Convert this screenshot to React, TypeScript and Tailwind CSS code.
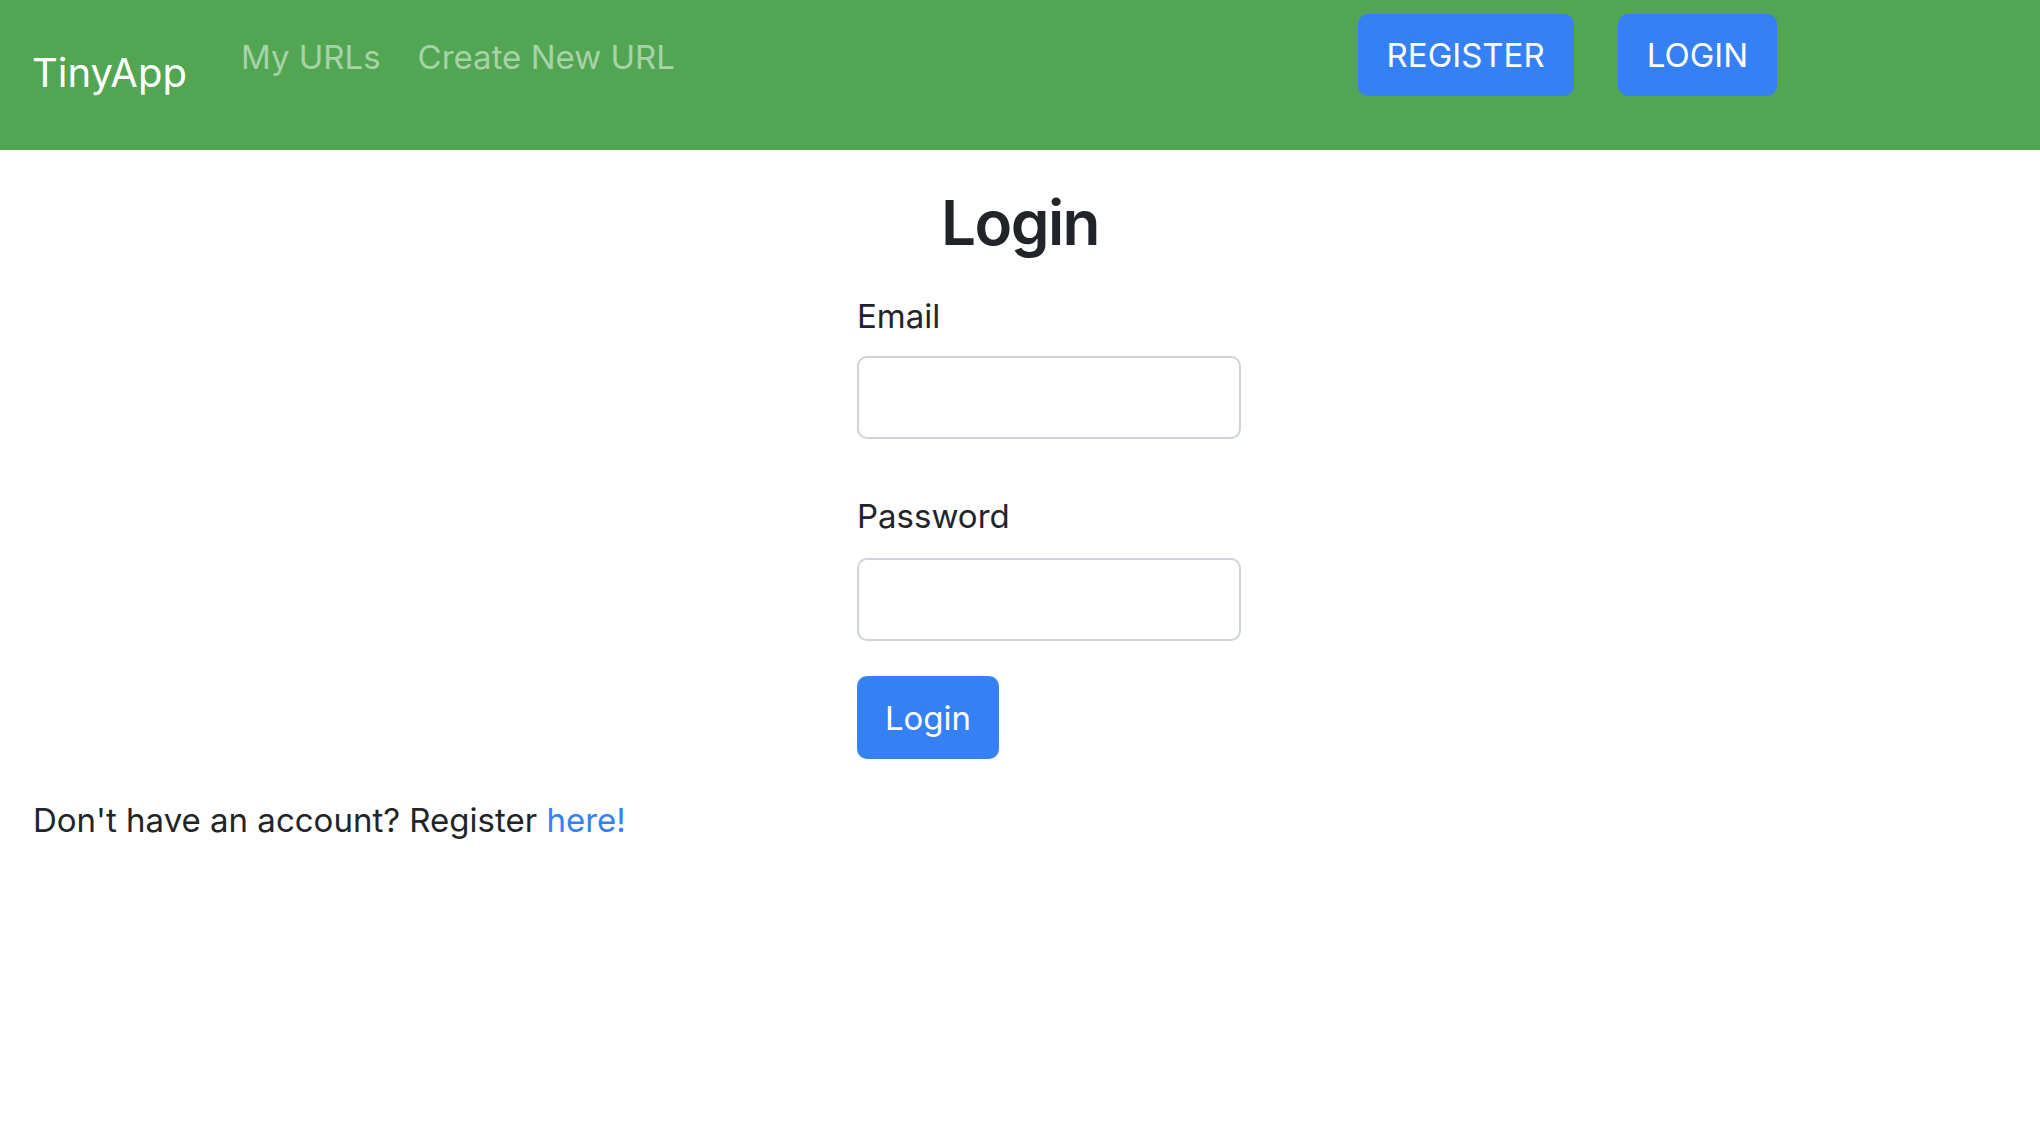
import React from 'react';

const NavBar: React.FC = () => {
  return (
    <nav className="h-[150px] bg-[#52a552] flex items-start">
      {/* marca y enlaces */}
      <a href="#" className="ml-[32px] mt-[49px] text-[40px] leading-[48px] text-white">TinyApp</a>
      <a href="#" className="ml-[54px] mt-[32px] text-[33px] leading-[50px] text-white/50">My URLs</a>
      <a href="#" className="ml-[37px] mt-[32px] text-[33px] leading-[50px] text-white/50">Create New URL</a>

      {/* botones */}
      <div className="ml-auto mr-[263px] mt-[14px] flex gap-[44px]">
        <button className="h-[82px] px-[29px] rounded-[10px] bg-[#3680f6] text-white text-[33px] leading-[50px]">REGISTER</button>
        <button className="h-[82px] px-[29px] rounded-[10px] bg-[#3680f6] text-white text-[33px] leading-[50px]">LOGIN</button>
      </div>
    </nav>
  );
};

const Field: React.FC<{ label: string; type: string; top: string; gap: string }> = ({ label, type, top, gap }) => {
  return (
    <div className={top}>
      <label className="block text-[33px] leading-[50px]">{label}</label>
      <input
        type={type}
        className={`${gap} block w-[384px] h-[83px] rounded-[10px] border-2 border-[#ced4da] bg-white px-4 text-[33px] outline-none`}
      />
    </div>
  );
};

export default function App() {
  return (
    <div className="min-h-screen bg-white text-[#212529]" style={{ fontFamily: 'Inter, "Noto Sans", sans-serif' }}>
      <NavBar />

      <h1 className="mt-[36px] text-center text-[62px] leading-[74px] font-semibold tracking-tight">Login</h1>

      <div className="flex justify-center">
        <form className="ml-[58px] w-[384px]" onSubmit={(e) => e.preventDefault()}>
          <Field label="Email" type="email" top="mt-[31px]" gap="mt-[15px]" />
          <Field label="Password" type="password" top="mt-[52px]" gap="mt-[17px]" />
          <button className="mt-[35px] w-[142px] h-[83px] rounded-[10px] bg-[#3680f6] text-white text-[33px] leading-[50px]">Login</button>
        </form>
      </div>

      <p className="mt-[36px] pl-[33px] text-[33px] leading-[50px]">
        Don't have an account? Register <a href="#" className="text-[#3680f6]">here!</a>
      </p>
    </div>
  );
}
